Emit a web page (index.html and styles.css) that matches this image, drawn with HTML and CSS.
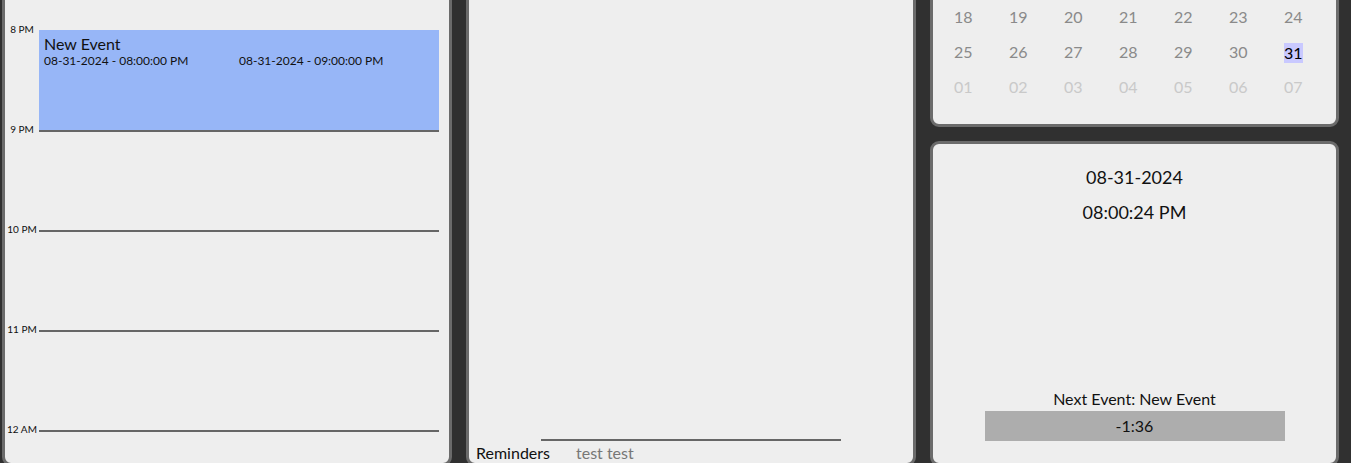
FILE: index.html
```html
<!DOCTYPE html>
<html lang="en">
<head>
<meta charset="utf-8">
<title>Planner</title>
<link rel="stylesheet" href="styles.css">
</head>
<body>
<main class="app">
  <section class="panel timeline">
    <div class="hour">
      <div class="hour-label">8 PM</div>
      <div class="slot">
        <div class="event">
          <div class="event-title">New Event</div>
          <div class="event-times">
            <span>08-31-2024 - 08:00:00 PM</span>
            <span>08-31-2024 - 09:00:00 PM</span>
          </div>
        </div>
      </div>
    </div>
    <div class="hour">
      <div class="hour-label">9 PM</div>
      <div class="slot"></div>
    </div>
    <div class="hour">
      <div class="hour-label">10 PM</div>
      <div class="slot"></div>
    </div>
    <div class="hour">
      <div class="hour-label">11 PM</div>
      <div class="slot"></div>
    </div>
    <div class="hour">
      <div class="hour-label">12 AM</div>
      <div class="slot"></div>
    </div>
  </section>

  <section class="panel notes">
    <div class="notes-body"></div>
    <div class="reminder-input"></div>
    <div class="reminders">
      <span class="reminders-label">Reminders</span>
      <span class="reminders-item">test test</span>
    </div>
  </section>

  <div class="side">
    <section class="panel calendar">
      <div class="month-grid">
        <span class="day">18</span><span class="day">19</span><span class="day">20</span><span class="day">21</span><span class="day">22</span><span class="day">23</span><span class="day">24</span>
        <span class="day">25</span><span class="day">26</span><span class="day">27</span><span class="day">28</span><span class="day">29</span><span class="day">30</span><span class="day"><span class="today">31</span></span>
        <span class="day other">01</span><span class="day other">02</span><span class="day other">03</span><span class="day other">04</span><span class="day other">05</span><span class="day other">06</span><span class="day other">07</span>
      </div>
    </section>

    <section class="panel clock">
      <div class="clock-date">08-31-2024</div>
      <div class="clock-time">08:00:24 PM</div>
      <div class="next-event">
        <div class="next-label">Next Event: New Event</div>
        <div class="next-bar">-1:36</div>
      </div>
    </section>
  </div>
</main>
</body>
</html>
```

FILE: styles.css
```css
* {
  box-sizing: border-box;
}

html, body {
  margin: 0;
  height: 463px;
  overflow: hidden;
  background: #303030;
  font-family: "Lato", "Noto Sans", sans-serif;
  color: #111;
}

.app {
  display: grid;
  grid-template-columns: 450px 450px 409px;
  column-gap: 14px;
  padding: 0 12px 0 2px;
  margin-top: -38px;
  height: 504px;
}

.panel {
  background: #eeeeee;
  border: 3px solid #6b6b6b;
  border-radius: 9px;
  overflow: hidden;
}

/* Timeline */
.timeline {
  padding: 65px 10px 0 0;
}

.hour {
  display: grid;
  grid-template-columns: 34px minmax(0, 1fr);
  height: 100px;
}

.hour-label {
  font-size: 10px;
  line-height: 12px;
  text-align: center;
  margin-top: -7px;
  height: 12px;
  white-space: nowrap;
}

.slot {
  border-top: 2px solid #666;
}

.event {
  margin-top: -2px;
  height: 100px;
  background: #97b6f7;
  padding: 4px 5px 0;
}

.event-title {
  font-size: 16px;
  line-height: 19px;
}

.event-times {
  display: grid;
  grid-template-columns: 1fr 1fr;
  font-size: 12px;
  line-height: 16px;
}

.event-times span {
  white-space: nowrap;
}

/* Notes / reminders */
.notes {
  display: flex;
  flex-direction: column;
  align-items: stretch;
}

.notes-body {
  flex: 1;
}

.reminder-input {
  align-self: center;
  width: 300px;
  border-top: 2px solid #666;
}

.reminders {
  display: flex;
  padding: 2px 7px 0;
  height: 22px;
  font-size: 16px;
  line-height: 20px;
}

.reminders-label {
  width: 100px;
}

.reminders-item {
  color: #777;
}

/* Side column */
.side {
  display: flex;
  flex-direction: column;
  gap: 14px;
}

.calendar {
  height: 165px;
  flex: none;
  padding: 34px 0 0 21px;
}

.month-grid {
  display: grid;
  grid-template-columns: repeat(7, 55px);
  grid-auto-rows: 35px;
  align-items: center;
  font-size: 16px;
  line-height: 20px;
}

.day {
  color: #8a8a8a;
}

.day.other {
  color: #c9c9c9;
}

.today {
  display: inline-block;
  background: #c9c9ff;
  color: #000;
  margin-top: 2px;
}

.clock {
  flex: 1;
  display: flex;
  flex-direction: column;
  align-items: center;
  padding: 16px 0 22px;
}

.clock-date,
.clock-time {
  font-size: 18px;
  line-height: 35px;
}

.next-event {
  margin-top: auto;
  display: flex;
  flex-direction: column;
  align-items: center;
  gap: 2px;
}

.next-label {
  font-size: 16px;
  line-height: 20px;
}

.next-bar {
  width: 300px;
  height: 30px;
  background: #adadad;
  font-size: 16px;
  line-height: 30px;
  text-align: center;
}
```
